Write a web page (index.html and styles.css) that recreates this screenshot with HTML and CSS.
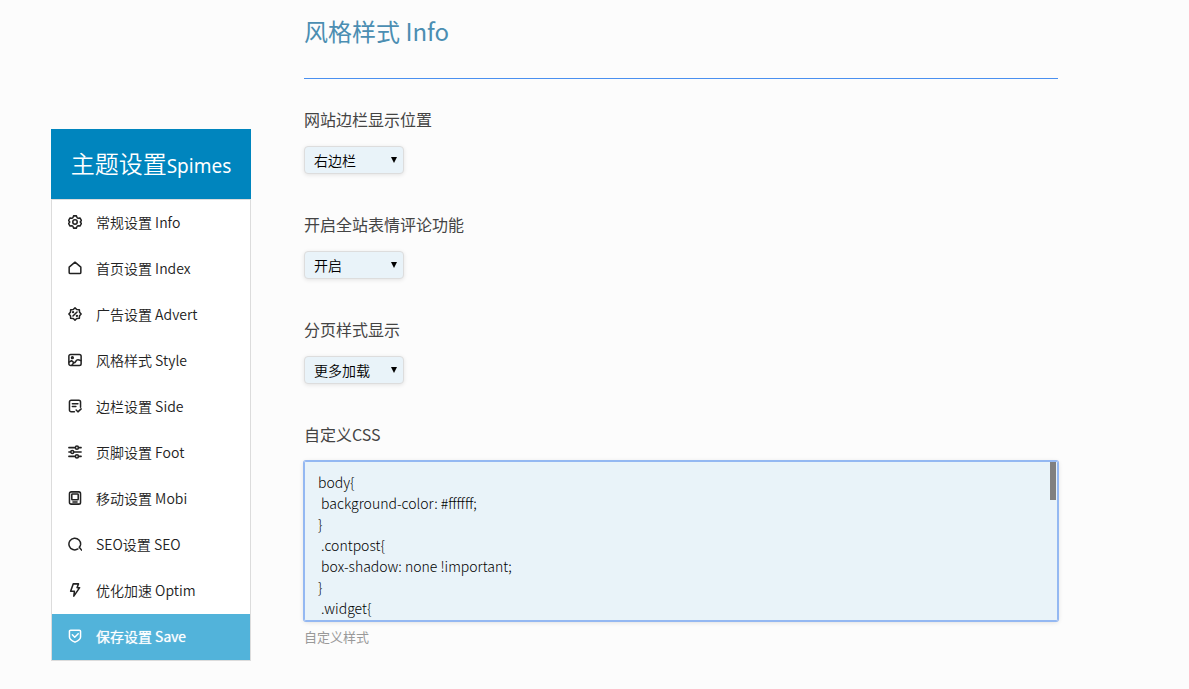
FILE: index.html
```
<!DOCTYPE html>
<html lang="zh-CN">
<head>
<meta charset="utf-8">
<title>主题设置 Spimes</title>
<meta name="viewport" content="width=device-width, initial-scale=1">
<link rel="stylesheet" href="styles.css">
</head>
<body>
<div class="page">
  <nav class="sidebar" aria-label="主题设置">
    <h2 class="brand">主题设置<small class="brand-name">Spimes</small></h2>
    <ul class="menu">
      <li><a class="item" href="#info"><svg class="icon" viewBox="0 0 24 24"><path d="M9.500 1.500h5l1 3 2 1.200 3-.6 2.500 4.200-2 2.700 2 2.700-2.500 4.200-3-.6-2 1.200-1 3h-5l-1-3-2-1.200-3 .6L1 14.700 3 12 1 9.300l2.500-4.200 3 .6 2-1.200z"/><circle cx="12" cy="12" r="3.800"/></svg>常规设置 Info</a></li>
      <li><a class="item" href="#index"><svg class="icon" viewBox="0 0 24 24"><path d="M4 21.500a2 2 0 0 1-2-2V10.500L12 2l10 8.500v9a2 2 0 0 1-2 2z"/></svg>首页设置 Index</a></li>
      <li><a class="item" href="#advert"><svg class="icon" viewBox="0 0 24 24"><path d="M12 1.500l3 2.700 4.400.4.400 4.400 2.700 3-2.700 3-.4 4.400-4.400.4-3 2.700-3-2.700-4.400-.4-.4-4.400-2.700-3 2.700-3 .4-4.400 4.400-.4z"/><path d="M15.500 8.500l-7 7"/><circle class="dot" cx="8.700" cy="8.900" r="2"/><circle class="dot" cx="15.300" cy="15.100" r="2"/></svg>广告设置 Advert</a></li>
      <li><a class="item" href="#style"><svg class="icon" viewBox="0 0 24 24"><rect x="1.500" y="2.500" width="21" height="19" rx="3"/><circle cx="7.500" cy="8" r="1.500"/><path d="M2 15.500l4-2.500 4 3.500c3 1.500 3-5 7-5 2 0 3 .5 5 1.500M10 16.500l-3 4"/></svg>风格样式 Style</a></li>
      <li><a class="item" href="#side"><svg class="icon" viewBox="0 0 24 24"><path d="M11 22H5.500a3 3 0 0 1-3-3V5a3 3 0 0 1 3-3h13a3 3 0 0 1 3 3v9M7.500 8h9.500M7.500 13h6M14 19l3 3 5.500-5"/></svg>边栏设置 Side</a></li>
      <li><a class="item" href="#foot"><svg class="icon" viewBox="0 0 24 24"><path d="M1.500 4.500h11M18 4.500h4.500M1.500 12h3M10 12h12.500M1.500 19.500h11M18 19.500h4.500"/><circle cx="15.300" cy="4.500" r="2.600"/><circle cx="7.300" cy="12" r="2.600"/><circle cx="15.300" cy="19.500" r="2.600"/></svg>页脚设置 Foot</a></li>
      <li><a class="item" href="#mobi"><svg class="icon" viewBox="0 0 24 24"><rect x="2.500" y="1.500" width="19" height="21" rx="3"/><rect x="6.500" y="5" width="11" height="10" rx="1"/><path d="M8.500 19h7"/></svg>移动设置 Mobi</a></li>
      <li><a class="item" href="#seo"><svg class="icon" viewBox="0 0 24 24"><path d="M17 20.500A10 10 0 1 1 21.500 13.500c-.4 1.500-1 2.700-2.200 4.200l4 4.800"/></svg>SEO设置 SEO</a></li>
      <li><a class="item" href="#optim"><svg class="icon" viewBox="0 0 24 24"><path d="M9 1.500h9L15.500 8H20L10 22.500 11 14H4.500z"/></svg>优化加速 Optim</a></li>
      <li><a class="item item-save" href="#save"><svg class="icon" viewBox="0 0 24 24"><path d="M4.500 2h15a2 2 0 0 1 2 2v9.500c0 3.500-4 6.500-9.500 9-5.500-2.500-9.500-5.500-9.500-9V4a2 2 0 0 1 2-2zM7.500 10l4 4 6-6"/></svg>保存设置 Save</a></li>
    </ul>
  </nav>
  <main class="content">
    <h1 class="title">风格样式 Info</h1>
    <form class="form">
      <div class="field">
        <label class="label" for="sidebar-pos">网站边栏显示位置</label>
        <div class="picker"><select class="select" id="sidebar-pos"><option>右边栏</option><option>左边栏</option></select></div>
      </div>
      <div class="field">
        <label class="label" for="emoji">开启全站表情评论功能</label>
        <div class="picker"><select class="select" id="emoji"><option>开启</option><option>关闭</option></select></div>
      </div>
      <div class="field">
        <label class="label" for="paging">分页样式显示</label>
        <div class="picker"><select class="select" id="paging"><option>更多加载</option><option>数字分页</option></select></div>
      </div>
      <div class="field">
        <label class="label" for="css">自定义CSS</label>
        <div class="editor">
          <textarea class="code" id="css" spellcheck="false" aria-describedby="css-help">body{
 background-color: #ffffff;
}
 .contpost{
 box-shadow: none !important;
}
 .widget{
 box-shadow: none !important;
}</textarea>
          <span class="thumb"></span>
        </div>
        <p class="help" id="css-help">自定义样式</p>
      </div>
    </form>
  </main>
</div>
</body>
</html>
```
FILE: styles.css
```
* {
  box-sizing: border-box;
}

body {
  margin: 0;
  background: #fcfcfc;
  color: #333;
  font-family: "Noto Sans CJK SC", sans-serif;
  font-size: 14px;
}

.page {
  display: grid;
  grid-template-columns: 200px minmax(0, 1fr);
  column-gap: 53px;
  align-items: start;
  padding: 0 131px 0 51px;
}

.sidebar {
  margin-top: 129px;
}

.brand {
  margin: 0;
  height: 70px;
  line-height: 68px;
  background: #0085be;
  color: #fff;
  font-size: 24px;
  font-weight: 350;
  text-align: center;
}

.brand-name {
  font-family: "Noto Sans", sans-serif;
  font-size: 19px;
  font-weight: 400;
}

.menu {
  margin: 0;
  padding: 0;
  list-style: none;
  background: #fff;
  border: 1px solid #dcdcdc;
}

.item {
  display: flex;
  align-items: center;
  gap: 14px;
  height: 46px;
  padding: 0 16px 2px;
  color: #222;
  font-weight: 350;
  text-decoration: none;
}

.item-save {
  background: #52b3da;
  color: #fff;
  text-shadow: 0 0 1px #fff;
}

.icon {
  width: 14px;
  height: 14px;
  fill: none;
  stroke: currentColor;
  stroke-width: 2.6;
  stroke-linecap: round;
  stroke-linejoin: round;
}

.dot {
  fill: currentColor;
  stroke: none;
}

.title {
  margin: 0;
  padding: 13px 0 29px;
  border-bottom: 1px solid #4a90f0;
  color: #4b8eb2;
  font-size: 24px;
  font-weight: 400;
  line-height: 36px;
}

.form {
  padding-top: 28px;
}

.field {
  margin-bottom: 38px;
}

.label {
  display: block;
  margin-bottom: 15px;
  color: #444;
  font-size: 16px;
  line-height: 24px;
}

.picker {
  position: relative;
  width: 100px;
}

.picker::after {
  content: "";
  position: absolute;
  top: 11px;
  right: 7px;
  border: 3px solid transparent;
  border-top: 6px solid #000;
  border-bottom: 0;
  pointer-events: none;
}

.select {
  display: block;
  width: 100%;
  height: 28px;
  padding: 0 9px 1px;
  appearance: none;
  background: #e9f3f9;
  border: 1px solid #ddd;
  border-radius: 4px;
  box-shadow: 0 1px 4px rgba(0, 0, 0, .1);
  color: #000;
  font: 350 14px/24px "Noto Sans CJK SC", sans-serif;
}

.editor {
  position: relative;
}

.code {
  display: block;
  width: 100%;
  height: 160px;
  padding: 10px 13px;
  resize: none;
  background: #e9f3f9;
  border: 1px solid #94b8f2;
  border-radius: 2px;
  outline: 0;
  box-shadow: 0 0 0 1px #94b8f2, 0 1px 5px rgba(0, 0, 0, .15);
  color: #000;
  font: 300 14px/21px "Noto Sans CJK SC", sans-serif;
  scrollbar-width: none;
}

.thumb {
  position: absolute;
  top: 1px;
  right: 2px;
  width: 6px;
  height: 38px;
  background: #808080;
  pointer-events: none;
}

.help {
  margin: 6px 0 0;
  color: #999;
  font-size: 13px;
  line-height: 20px;
}
```
